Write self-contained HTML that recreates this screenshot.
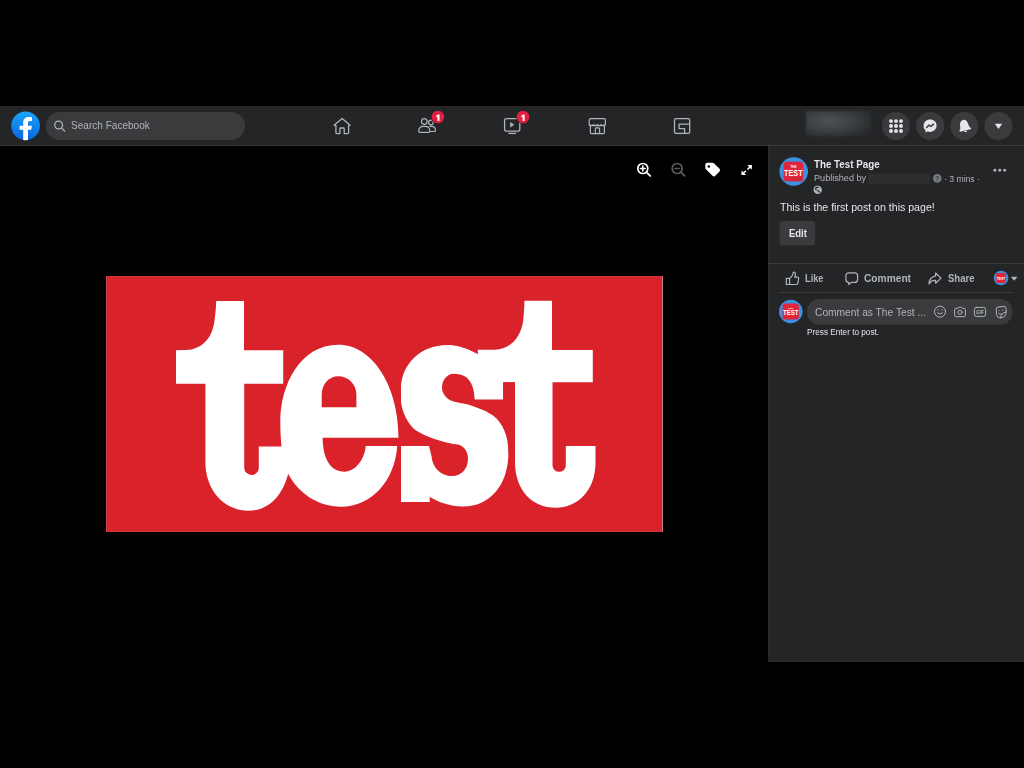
<!DOCTYPE html>
<html><head><meta charset="utf-8">
<style>
*{margin:0;padding:0;box-sizing:border-box}
html,body{width:1024px;height:768px;overflow:hidden;background:#000;font-family:"Liberation Sans",sans-serif}
.abs{position:absolute}
#nav{left:0;top:106px;width:1024px;height:40px;background:#242526;border-bottom:1px solid #393a3b}
#panel{left:768px;top:146px;width:256px;height:516px;background:#242526;border-left:1px solid #2a2b2c;border-bottom:1px solid #2c2d2e}
#photo{left:106px;top:276px;width:557px;height:256px;background:#da222a;border:1px solid #c7393f;border-left-color:#c8454b;border-right-color:#c98388}
.txt{white-space:nowrap;color:#e4e6eb;transform-origin:0 0}
</style></head><body>
<div id="nav" class="abs"></div>
<div id="panel" class="abs"></div>

<!-- NAV -->
<svg class="abs" style="left:0;top:0" width="1024" height="160" viewBox="0 0 1024 160">
  <defs>
    <linearGradient id="fbg" x1="0" y1="1" x2="0" y2="0"><stop offset="0" stop-color="#0a64e2"/><stop offset="1" stop-color="#1aa6f8"/></linearGradient>
    <radialGradient id="blurg" cx="0.35" cy="0.4" r="0.7"><stop offset="0" stop-color="#4d5254"/><stop offset="0.6" stop-color="#3a3d3f"/><stop offset="1" stop-color="#2a2c2d"/></radialGradient>
  </defs>
  <g transform="translate(11.2 111.4) scale(0.8)">
    <path d="M15 35.8C6.5 34.3 0 26.9 0 18 0 8.1 8.1 0 18 0s18 8.1 18 18c0 8.9-6.5 16.3-15 17.8l-1-.8h-4l-1 .8z" fill="url(#fbg)"/>
    <path d="M25 23l.8-5H21v-3.5c0-1.4.5-2.5 2.7-2.5H26V7.4c-1.3-.2-2.7-.4-4-.4-4.1 0-7 2.5-7 7v4h-4.5v5H15v12.7c1 .2 2 .3 3 .3s2-.1 3-.3V23h4z" fill="#fff"/>
  </g>
  <rect x="46" y="112" width="199" height="28" rx="14" fill="#3a3b3c"/>
  <g fill="none" stroke="#b0b3b8" stroke-width="1.3" stroke-linecap="round">
    <circle cx="58.6" cy="125" r="3.9"/>
    <path d="M61.5 127.9 L64.6 131"/>
  </g>
  <!-- home -->
  <g fill="none" stroke="#b0b3b8" stroke-width="1.3" stroke-linejoin="round" stroke-linecap="round">
    <path d="M334 125.2 L342.1 118.4 L350.2 125.2 L348.6 125.6 L348.6 132.6 Q348.6 133.6 347.6 133.6 L344.2 133.6 L344.2 128.8 Q344.2 128 343.4 128 L340.7 128 Q339.9 128 339.9 128.8 L339.9 133.6 L336.9 133.6 Q335.9 133.6 335.9 132.6 L335.9 125.6 Z"/>
  </g>
  <!-- friends -->
  <g fill="none" stroke="#b0b3b8" stroke-width="1.2">
    <circle cx="424.3" cy="121.5" r="2.8"/>
    <circle cx="430.9" cy="122.5" r="2.3"/>
    <path d="M418.7 131.3 C418.7 128.2 420.4 126.4 423.5 126.4 L425.2 126.4 C428.2 126.4 429.8 128.2 429.8 131.3 Q429.8 132.4 428.8 132.4 L419.8 132.4 Q418.7 132.4 418.7 131.3 Z"/>
    <path d="M429.4 126.5 C429.8 126.4 430.3 126.4 430.8 126.4 L431.6 126.4 C434 126.4 435.5 128 435.5 130.5 Q435.5 131.5 434.5 131.5 L429.9 131.5"/>
  </g>
  <!-- watch -->
  <g fill="none" stroke="#b0b3b8" stroke-width="1.3">
    <rect x="504.6" y="118.6" width="15.2" height="12.6" rx="2"/>
    <path d="M508.3 133.4 L516.2 133.4"/>
  </g>
  <path d="M510.2 122 L514.4 124.7 L510.2 127.4 Z" fill="#b0b3b8"/>
  <!-- marketplace -->
  <g fill="none" stroke="#b0b3b8" stroke-width="1.2" stroke-linejoin="round">
    <path d="M590.8 118.6 L603.8 118.6 Q605.4 118.6 605.4 120.3 L605.4 124.2 Q605.4 125.6 604 125.6 L590.6 125.6 Q589.2 125.6 589.2 124.2 L589.2 120.3 Q589.2 118.6 590.8 118.6 Z"/>
    <path d="M589.6 124.6 Q591.5 126.3 593.4 124.6 Q595.3 126.3 597.3 124.6 Q599.2 126.3 601.1 124.6 Q603 126.3 605 124.6"/>
    <path d="M590.4 126 L590.4 132.4 Q590.4 133.6 591.6 133.6 L603.2 133.6 Q604.4 133.6 604.4 132.4 L604.4 126"/>
    <path d="M595.3 133.4 L595.3 128.9 Q595.3 127.9 596.3 127.9 L598.6 127.9 Q599.6 127.9 599.6 128.9 L599.6 133.4"/>
  </g>
  <!-- gaming -->
  <g fill="none" stroke="#b0b3b8" stroke-width="1.3" stroke-linejoin="round">
    <rect x="674.5" y="118.6" width="15.2" height="14.8" rx="1.4"/>
    <path d="M689.7 124.1 L679.1 124.1 L679.1 128.7 L684.6 128.7 L684.6 133.4"/>
  </g>
  <!-- badges -->
  <circle cx="437.9" cy="117" r="6.9" fill="#242526"/>
  <circle cx="437.9" cy="117" r="6.3" fill="#e41e3f"/>
  <circle cx="523" cy="117" r="6.9" fill="#242526"/>
  <circle cx="523" cy="117" r="6.3" fill="#e41e3f"/>
  <path fill="#fff" d="M437.5 120.9 L437.5 116.4 L436.2 117.2 L436.2 115.8 L438.1 114.5 L439.5 114.5 L439.5 120.9 Z"/>
  <path fill="#fff" d="M522.6 120.9 L522.6 116.4 L521.3 117.2 L521.3 115.8 L523.2 114.5 L524.6 114.5 L524.6 120.9 Z"/>
  <!-- blurred profile -->
  <g filter="url(#bl)">
    <rect x="806" y="111" width="65" height="25" fill="url(#blurg)"/>
  </g>
  <filter id="bl" x="-20%" y="-50%" width="140%" height="200%"><feGaussianBlur stdDeviation="1.2"/></filter>
  <!-- right circles -->
  <g fill="#3a3b3c">
    <circle cx="896" cy="126" r="14"/>
    <circle cx="930.2" cy="126" r="14"/>
    <circle cx="964.3" cy="126" r="14"/>
    <circle cx="998.3" cy="126" r="14"/>
  </g>
  <g fill="#e4e6eb">
    <circle cx="891" cy="121.1" r="1.95"/><circle cx="896" cy="121.1" r="1.95"/><circle cx="901" cy="121.1" r="1.95"/>
    <circle cx="891" cy="126" r="1.95"/><circle cx="896" cy="126" r="1.95"/><circle cx="901" cy="126" r="1.95"/>
    <circle cx="891" cy="131" r="1.95"/><circle cx="896" cy="131" r="1.95"/><circle cx="901" cy="131" r="1.95"/>
    <path d="M930.1 119.6 C926.4 119.6 923.6 122.3 923.6 125.9 C923.6 127.8 924.4 129.4 925.6 130.5 L925.6 132.4 L927.5 131.4 C928.3 131.7 929.2 131.9 930.1 131.9 C933.8 131.9 936.6 129.2 936.6 125.6 C936.6 122.1 933.8 119.6 930.1 119.6 Z"/>
    <g transform="rotate(-13 964.4 126)"><path d="M958.6 129.3 C959.4 128.6 960 127.8 960.1 125.8 C960.3 122.1 961.8 119.8 964.4 119.8 C967 119.8 968.5 122.1 968.7 125.8 C968.8 127.8 969.4 128.6 970.2 129.3 C970.6 129.9 970.3 130.6 969.6 130.6 L959.2 130.6 C958.5 130.6 958.2 129.9 958.6 129.3 Z"/>
    <path d="M962.9 131 L965.9 131 Q965.5 132.5 964.4 132.5 Q963.3 132.5 962.9 131 Z"/></g>
    <path d="M994.8 123.8 L1002.2 123.8 L998.5 129 Z"/>
  </g>
  <path d="M926.7 127.5 L929 125.1 L930.9 126.5 L933.5 124.1" fill="none" stroke="#3a3b3c" stroke-width="1.5" stroke-linejoin="round" stroke-linecap="round"/>
</svg>

<div id="photo" class="abs"></div>

<!-- PHOTO ICONS -->
<svg class="abs" style="left:620px;top:150px" width="148" height="40" viewBox="620 150 148 40">
  <g fill="none" stroke="#fff" stroke-width="1.7" stroke-linecap="round">
    <circle cx="642.8" cy="168.5" r="5"/>
    <path d="M646.6 172.3 L650.2 175.9" stroke-width="1.9"/>
    <path d="M640.4 168.5 L645.2 168.5 M642.8 166.1 L642.8 170.9" stroke-width="1.6"/>
  </g>
  <g fill="none" stroke="#5a5a5a" stroke-width="1.7" stroke-linecap="round">
    <circle cx="677.2" cy="168.5" r="5"/>
    <path d="M681 172.3 L684.6 175.9" stroke-width="1.9"/>
    <path d="M674.8 168.5 L679.6 168.5" stroke-width="1.6"/>
  </g>
  <path fill="#fff" d="M707.3 162.8 L712.3 162.8 Q713.5 162.8 714.4 163.7 L719.5 168.8 Q720.8 170.1 719.5 171.4 L715.3 175.8 Q713.9 177.2 712.5 175.8 L706.2 169.5 Q705.3 168.6 705.3 167.4 L705.3 164.8 Q705.3 162.8 707.3 162.8 Z"/>
  <circle cx="708.8" cy="166.5" r="1.25" fill="#000"/>
  <g fill="#fff">
    <path d="M747.3 165.1 L751.9 165.1 L751.9 169.7 Z"/>
    <path d="M746.1 175.1 L741.5 175.1 L741.5 170.5 Z"/>
  </g>
  <g stroke="#fff" stroke-width="1.5" stroke-linecap="square">
    <path d="M750.6 166.4 L748 169"/>
    <path d="M742.8 173.8 L745.4 171.2"/>
  </g>
</svg>

<!-- PANEL CONTENT -->
<svg class="abs" style="left:768px;top:146px" width="256" height="200" viewBox="768 146 256 200">
  <!-- avatar big -->
  <circle cx="793.7" cy="171.5" r="14.3" fill="#3d8fe0"/>
  <rect x="783.6" y="161.7" width="19.6" height="19.6" rx="3.4" fill="#e0263a"/>
  <path d="M788 181.3 L802.8 181.3 L802.8 176 Z" fill="#c81f32" opacity="0.6"/>
  <text x="793.3" y="176" text-anchor="middle" font-family="Liberation Sans" font-weight="700" font-size="8.4" fill="#fff" textLength="18.6" lengthAdjust="spacingAndGlyphs">TEST</text>
  <text x="793.5" y="168.3" text-anchor="middle" font-family="Liberation Sans" font-weight="700" font-size="3" fill="#fff">THE</text>
  <!-- more dots -->
  <g fill="#b0b3b8"><circle cx="994.9" cy="170.2" r="1.45"/><circle cx="999.8" cy="170.2" r="1.45"/><circle cx="1004.7" cy="170.2" r="1.45"/></g>
  <!-- blurred name -->
  <rect x="868.6" y="173.8" width="61" height="10.2" fill="#2d2e2f"/>
  <!-- ? -->
  <circle cx="937.3" cy="178.4" r="4.3" fill="#76797d"/>
  <text x="937.3" y="181.1" text-anchor="middle" font-family="Liberation Sans" font-weight="700" font-size="6.5" fill="#3a3b3c">?</text>
  <!-- globe -->
  <circle cx="817.75" cy="189.9" r="4.2" fill="#b0b3b8"/>
  <path d="M814.1 188.2 Q814.9 186.4 817 186" fill="none" stroke="#8f9296" stroke-width="1.4"/>
  <path d="M818.2 187.4 Q815.8 187.1 815.6 188.6 Q815.6 189.6 816.4 189.9" fill="none" stroke="#242526" stroke-width="1.1" stroke-linecap="round"/>
  <path d="M816.7 190.3 Q818.6 189.7 819.7 191.2 Q820.1 192.6 819.1 192.9 Q817.9 191.6 816.7 190.3 Z" fill="#242526"/>
  <!-- edit button -->
  <rect x="779.5" y="220.7" width="35.7" height="24.9" rx="4" fill="#3a3b3c"/>
  <!-- dividers -->
  <rect x="768" y="263" width="256" height="1" fill="#393a3b"/>
  <rect x="779.5" y="292" width="233" height="1" fill="#393a3b"/>
  <!-- like icon -->
  <g fill="none" stroke="#b0b3b8" stroke-width="1.2" stroke-linejoin="round">
    <path d="M786.3 278.3 L789.6 278.3 L789.6 284.5 L786.3 284.5 Z"/>
    <path d="M789.6 278.6 L792.2 275.6 Q793 274.6 793 273.2 Q793 272.1 793.9 272.1 Q795.2 272.1 795.4 273.6 Q795.6 275.5 794.6 277.2 L797.2 277.2 Q798.9 277.2 798.6 278.9 L797.9 283.1 Q797.6 284.5 796.2 284.5 L789.6 284.5"/>
  </g>
  <!-- comment icon -->
  <path fill="none" stroke="#b0b3b8" stroke-width="1.2" stroke-linejoin="round" d="M849 272.9 L854.6 272.9 Q857.6 272.9 857.6 275.9 L857.6 279.4 Q857.6 282.4 854.6 282.4 L851.2 282.4 L848.9 284.6 L848.6 282.3 Q845.9 282 845.9 279.4 L845.9 275.9 Q845.9 272.9 849 272.9 Z"/>
  <!-- share icon -->
  <path fill="none" stroke="#b0b3b8" stroke-width="1.2" stroke-linejoin="round" d="M935.6 273 L941 278.1 L935.6 283.2 L935.6 280.4 Q931.4 280 929 284 Q929.2 277.4 935.6 275.9 Z"/>
  <!-- small avatar -->
  <circle cx="1001.1" cy="278" r="7.3" fill="#3d8fe0"/>
  <rect x="996.2" y="273.1" width="9.8" height="9.8" rx="1.4" fill="#e0263a"/>
  <text x="1001.1" y="280.3" text-anchor="middle" font-family="Liberation Sans" font-weight="700" font-size="3.8" fill="#fff" textLength="8.8" lengthAdjust="spacingAndGlyphs">TEST</text>
  <path d="M1010.8 276.8 L1017.5 276.8 L1014.15 280.8 Z" fill="#b0b3b8"/>
  <!-- comment avatar -->
  <circle cx="790.8" cy="311.5" r="11.8" fill="#3d8fe0"/>
  <rect x="782.6" y="303.4" width="16.2" height="16.2" rx="2.9" fill="#e0263a"/>
  <text x="790.7" y="315.1" text-anchor="middle" font-family="Liberation Sans" font-weight="700" font-size="7" fill="#fff" textLength="15.4" lengthAdjust="spacingAndGlyphs">TEST</text>
  <text x="790.7" y="308.9" text-anchor="middle" font-family="Liberation Sans" font-weight="700" font-size="2.5" fill="#fff">THE</text>
  <!-- input -->
  <rect x="807" y="299" width="205.6" height="25.8" rx="12.9" fill="#3a3b3c"/>
  <g fill="none" stroke="#b0b3b8" stroke-width="1" stroke-linecap="round" stroke-linejoin="round">
    <circle cx="940" cy="311.7" r="5.5"/>
    <path d="M937.6 313 Q940 315.4 942.4 313"/>
    <path d="M954.6 309.5 Q954.6 308.4 955.7 308.4 L957.5 308.4 L958.4 307.2 L961.6 307.2 L962.5 308.4 L964.3 308.4 Q965.4 308.4 965.4 309.5 L965.4 315.6 Q965.4 316.7 964.3 316.7 L955.7 316.7 Q954.6 316.7 954.6 315.6 Z"/>
    <circle cx="960" cy="312.2" r="2.1"/>
    <rect x="974.4" y="307.4" width="11.2" height="9" rx="2"/>
    <path d="M996.2 308.9 Q996.2 307.2 998 307 L1004 306.5 Q1006 306.4 1006 308.4 L1006 312 Q1006 317.6 1000.4 317.9 Q997 318 996.6 315 Z"/><path d="M1006 312 Q1001.4 312.4 1000.5 317.8"/><path d="M998.6 313.4 Q999.8 315 1001.4 314"/>
  </g>
  <g fill="#b0b3b8">
    <circle cx="938" cy="309.9" r="0.6"/><circle cx="942" cy="309.9" r="0.6"/>
    <circle cx="999" cy="310.6" r="0.6"/><circle cx="1002.6" cy="310" r="0.6"/>
  </g>
  <text x="980" y="314.1" text-anchor="middle" font-family="Liberation Sans" font-weight="700" font-size="4.8" fill="#b0b3b8">GIF</text>
</svg>

<svg class="abs" style="left:0;top:0" width="1024" height="768" viewBox="0 0 1024 768">
  <!-- t1 -->
  <path fill="#fff" d="M216.2 301 L244 301 L244 350.2 L283.2 350.2 L283.2 383.8 L244.2 383.8 L244.2 467.7 A7.3 7.3 0 0 0 258.8 467.7 L258.8 446.4 L290 446.4 L289 470 C284 494 270 510.7 248.4 510.7 C224 510.7 205.4 490 205.4 462 L205.4 383.8 L176 383.8 L176 350.3 L186 350.1 C201 349.5 212 339 214.3 322 C215.5 313 216.2 306 216.2 301 Z"/>
  <!-- e -->
  <path fill="#fff" d="M338.4 344.8 C372 344.8 398.5 385 398.5 437.8 L397.2 446 C395 480 372 506.8 341 506.8 C318 506.8 298 493 287.8 473.3 C282 460 280.3 440 280.3 422 C280.3 385 300 344.8 338.4 344.8 Z"/>
  <!-- s -->
  <path fill="#fff" d="M447.3 345 C456 345 465 347 477.8 354.3 L477.8 351 L503.2 351 L503.2 399.6 L508.4 399.6 L508.4 452.5 C508.4 485 490 506.6 462.9 506.6 C450 506.6 438 502 429.7 496.8 L429.7 502 L401 502 L401 388.6 C401 365 420 345 447.3 345 Z"/>
  <!-- t2 -->
  <path fill="#fff" d="M524.4 300.7 L552 300.7 L552 350.1 L592.8 350.1 L592.8 382.3 L552.5 382.3 L552.5 465.2 A6.65 6.65 0 0 0 565.8 465.2 L565.8 446.1 L595.5 446.1 L595.5 462.5 C595.5 490 578 507.8 555.6 507.8 C532 507.8 515 490 515 462 L515 382.3 L478 382.3 L478 349.8 L495 349.8 C510 349 521 338 523.3 320 C524 312 524.4 305 524.4 300.7 Z"/>
  <!-- red counters -->
  <g fill="#da222a">
    <path d="M321.7 407.3 L321.7 394.7 C321.7 384 329 376.2 338.4 376.2 C348 376.2 356.4 384 356.4 394.7 L356.4 407.3 Z"/>
    <path d="M322.6 437.8 L401 437.8 L401 401.6 C402 412 408 425 416 430.4 C425 436 440 442 459 444.7 C465 447 468 452 468 459 C468 469 461 476 452.5 476 C440 476 432 466 431.6 456.4 L429 446 L365.7 446 C365 458 356 471.7 344.5 471.7 C331 471.7 323 460 322.6 437.8 Z"/>
    <path d="M474.6 399.6 L503.2 399.6 L503.2 382.3 L514.4 382.3 L514.4 452.5 L508.4 452.5 C508.4 436 503 423 493 415.5 C484 409.5 476 407 466 404 C458 402.5 452 401.5 449 399.5 C444.5 396.5 442 392 442 387.8 C442 380 447 373.7 453.8 373.7 C458 373.7 462 374.5 466 377 C472 382 474.5 390 474.6 399.6 Z"/>
  </g>
</svg>
<div class="abs txt" style="left:71.4px;top:120.29px;font-size:11.0px;line-height:11.0px;color:#b0b3b8;transform:scaleX(0.9140)">Search Facebook</div>
<div class="abs txt" style="left:813.6px;top:158.59px;font-size:11.0px;line-height:11.0px;color:#e4e6eb;font-weight:700;transform:scaleX(0.8893)">The Test Page</div>
<div class="abs txt" style="left:813.6px;top:173.49px;font-size:9.7px;line-height:9.7px;color:#b0b3b8;transform:scaleX(0.9398)">Published by</div>
<div class="abs txt" style="left:944.0px;top:173.59px;font-size:9.7px;line-height:9.7px;color:#b0b3b8;transform:scaleX(0.8906)">· 3 mins ·</div>
<div class="abs txt" style="left:780.0px;top:201.59px;font-size:11.0px;line-height:11.0px;color:#e4e6eb;transform:scaleX(0.9621)">This is the first post on this page!</div>
<div class="abs txt" style="left:788.7px;top:227.59px;font-size:11.0px;line-height:11.0px;color:#e4e6eb;font-weight:700;transform:scaleX(0.8616)">Edit</div>
<div class="abs txt" style="left:804.75px;top:272.59px;font-size:11.0px;line-height:11.0px;color:#b0b3b8;font-weight:700;transform:scaleX(0.8404)">Like</div>
<div class="abs txt" style="left:863.9px;top:272.59px;font-size:11.0px;line-height:11.0px;color:#b0b3b8;font-weight:700;transform:scaleX(0.9266)">Comment</div>
<div class="abs txt" style="left:947.6px;top:272.59px;font-size:11.0px;line-height:11.0px;color:#b0b3b8;font-weight:700;transform:scaleX(0.8668)">Share</div>
<div class="abs txt" style="left:815.1px;top:306.69px;font-size:11.0px;line-height:11.0px;color:#b0b3b8;transform:scaleX(0.9295)">Comment as The Test ...</div>
<div class="abs txt" style="left:806.75px;top:326.59px;font-size:9.7px;line-height:9.7px;color:#e4e6eb;transform:scaleX(0.8476)">Press Enter to post.</div>
</body></html>
